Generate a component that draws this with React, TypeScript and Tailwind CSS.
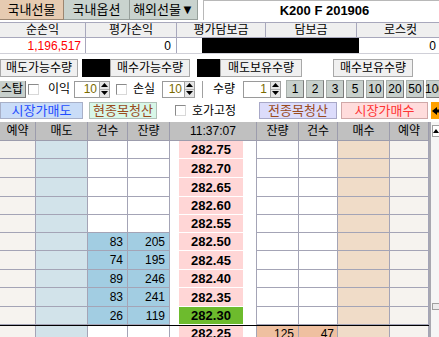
import React from "react";

const rowH = [
  "h-[18px]",
  "h-[19px]",
  "h-[19px]",
  "h-[18px]",
  "h-[18px]",
  "h-[18px]",
  "h-[19px]",
  "h-[18px]",
  "h-[19px]",
  "h-[18px]",
];

const data: { p: string; c?: string; q?: string; green?: boolean }[] = [
  { p: "282.75" },
  { p: "282.70" },
  { p: "282.65" },
  { p: "282.60" },
  { p: "282.55" },
  { p: "282.50", c: "83", q: "205" },
  { p: "282.45", c: "74", q: "195" },
  { p: "282.40", c: "89", q: "246" },
  { p: "282.35", c: "83", q: "241" },
  { p: "282.30", c: "26", q: "119", green: true },
];

const grid =
  "grid grid-cols-[36px_52px_40px_42px_87px_42px_39px_52px_39px]";
const line = "border-r border-b border-[#a4a4b6]";

function Spin() {
  return (
    <div className="w-[11px] h-full flex flex-col bg-[#e6e6e6] border border-[#a0a0a0]">
      <div className="flex-1 flex items-center justify-center border-b border-[#b0b0b0]">
        <svg width="7" height="4" viewBox="0 0 7 4">
          <path d="M0 4L3.5 0L7 4Z" fill="#000" />
        </svg>
      </div>
      <div className="flex-1 flex items-center justify-center">
        <svg width="7" height="4" viewBox="0 0 7 4">
          <path d="M0 0L7 0L3.5 4Z" fill="#000" />
        </svg>
      </div>
    </div>
  );
}

function Check() {
  return (
    <div className="w-[11px] h-[11px] bg-white border border-[#8a8a8a] border-r-[#d8d8d8] border-b-[#d8d8d8]" />
  );
}

export default function App() {
  const nums = ["1", "2", "3", "5", "10", "20", "50", "100"];
  return (
    <div className="w-[439px] h-[337px] overflow-hidden bg-white text-black font-['Liberation_Sans','Noto_Sans_CJK_KR',sans-serif] text-[12px] leading-none">
      {/* Tabs */}
      <div className="flex h-[20px] w-[439px]">
        <div className="w-[64px] bg-[#e6cbb1] border-r border-b border-[#9c8670] flex items-center justify-center text-[13px]">
          국내선물
        </div>
        <div className="w-[66px] bg-[#c9d3ce] border-r border-b border-[#97a09b] flex items-center justify-center text-[13px]">
          국내옵션
        </div>
        <div className="w-[68px] bg-[#c9d3ce] border-r border-b border-[#97a09b] flex items-center justify-center text-[13px]">
          해외선물▼
        </div>
        <div className="w-[5px]" />
        <div className="flex-1 bg-white border-l border-t border-[#b8b8b8] flex items-center justify-center font-bold text-[13px] pl-[6px]">
          K200 F 201906
        </div>
      </div>

      {/* Summary header */}
      <div className="mt-[2px] w-[445px] grid grid-cols-[86px_91px_89px_91px_88px] h-[16px] bg-[#efefef] border-t border-b border-[#a8a8bc]">
        {["순손익", "평가손익", "평가담보금", "담보금", "로스컷"].map((t) => (
          <div
            key={t}
            className="border-r border-[#a8a8bc] flex items-center justify-center"
          >
            {t}
          </div>
        ))}
      </div>
      <div className="w-[445px] grid grid-cols-[86px_91px_89px_91px_88px] h-[16px] bg-white border-b border-[#d0d0d8]">
        <div className="border-r border-[#a8a8bc] flex items-center justify-end pr-[4px] text-[#ff0000]">
          1,196,517
        </div>
        <div className="border-r border-[#a8a8bc] flex items-center justify-end pr-[5px]">
          0
        </div>
        <div className="flex">
          <div className="w-[25px]" />
          <div className="flex-1 bg-black" />
        </div>
        <div className="bg-black w-[93px]" />
        <div className="flex items-center justify-end pr-[9px]">0</div>
      </div>

      {/* Quantity row */}
      <div className="mt-[5px] flex h-[18px] w-[439px]">
        <div className="w-[78px] bg-[#f0f0f0] border border-[#a8a8a8] flex items-center justify-center">
          매도가능수량
        </div>
        <div className="w-[4px]" />
        <div className="w-[28px] bg-black" />
        <div className="w-[80px] bg-[#f0f0f0] border border-[#a8a8a8] flex items-center justify-center">
          매수가능수량
        </div>
        <div className="w-[7px]" />
        <div className="w-[23px] bg-black" />
        <div className="w-[82px] bg-[#f0f0f0] border border-[#a8a8a8] flex items-center justify-center">
          매도보유수량
        </div>
        <div className="w-[31px] bg-white" />
        <div className="w-[80px] bg-[#f0f0f0] border border-[#a8a8a8] flex items-center justify-center">
          매수보유수량
        </div>
        <div className="flex-1 bg-white" />
      </div>

      {/* Stop row */}
      <div className="mt-[3px] flex items-center h-[18px] w-[460px]">
        <div className="w-[26px] h-[17px] bg-[#c8d0cc] border-r border-b border-[#7a7a7a] flex items-center justify-end pr-[2px]">
          스탑
        </div>
        <div className="w-[2px]" />
        <Check />
        <div className="w-[9px]" />
        <div className="w-[26px]">이익</div>
        <div className="flex h-[17px] ml-[0px]">
          <div className="w-[25px] bg-white border border-[#9a9a9a] border-r-0 flex items-center justify-end pr-[2px] text-[#7a6a00]">
            10
          </div>
          <Spin />
        </div>
        <div className="w-[6px]" />
        <Check />
        <div className="w-[6px]" />
        <div className="w-[29px]">손실</div>
        <div className="flex h-[17px]">
          <div className="w-[22px] bg-white border border-[#9a9a9a] border-r-0 flex items-center justify-end pr-[2px] text-[#7a6a00]">
            10
          </div>
          <Spin />
        </div>
        <div className="w-[7px]" />
        <div className="w-[41px] h-[17px] bg-white border-l border-[#a0a0a0] flex items-center pl-[10px]">
          수량
        </div>
        <div className="flex h-[17px]">
          <div className="w-[27px] bg-white border border-[#9a9a9a] border-r-0 flex items-center justify-end pr-[3px] text-[#7a6a00]">
            1
          </div>
          <Spin />
        </div>
        <div className="w-[5px]" />
        <div className="flex gap-[2px]">
          {nums.map((n) => (
            <div
              key={n}
              className="w-[18px] h-[18px] bg-[#c8d0cc] border border-[#7c7c7c] border-t-[#a8b0ac] border-l-[#a8b0ac] flex items-center justify-center text-[12px]"
            >
              {n}
            </div>
          ))}
        </div>
      </div>

      {/* Action row */}
      <div className="mt-[4px] flex items-center h-[17px] w-[445px]">
        <div className="w-[83px] h-[17px] bg-[#c9dcf7] border border-[#a8b0c8] flex items-center justify-center text-[#1f4cff] text-[13px]">
          시장가매도
        </div>
        <div className="w-[6px]" />
        <div className="w-[68px] h-[17px] bg-[#d8f7e8] border border-[#b0c0b8] flex items-center justify-center text-[#9a4a1c] text-[13px]">
          현종목청산
        </div>
        <div className="w-[18px]" />
        <Check />
        <div className="w-[6px]" />
        <div className="w-[67px]">호가고정</div>
        <div className="w-[78px] h-[17px] bg-[#dcdcfb] border border-[#a8a8c8] flex items-center justify-center text-[#9a4a1c] text-[13px]">
          전종목청산
        </div>
        <div className="w-[4px]" />
        <div className="w-[87px] h-[17px] bg-[#ffdcdc] border border-[#d0a8a8] flex items-center justify-center text-[#ff3333] text-[13px]">
          시장가매수
        </div>
        <div className="w-[3px]" />
        <div className="w-[14px] h-[17px] bg-[#ffa000] flex items-center justify-start pl-[1px]">
          <svg width="10" height="8" viewBox="0 0 10 8">
            <path d="M0 4L5 0V2.5H10V5.5H5V8Z" fill="#000" />
          </svg>
        </div>
      </div>

      {/* Order book */}
      <div className="mt-[3px] flex w-[439px]">
        <div className="w-[429px] flex flex-col">
          <div className={`${grid} h-[19px] bg-[#c0c0c0]`}>
            {["예약", "매도", "건수", "잔량", "11:37:07", "잔량", "건수", "매수", "예약"].map(
              (t, i) => (
                <div
                  key={i}
                  className={`border-r border-b border-[#9c9cac] flex items-center justify-center ${
                    i === 4 ? "text-[12px]" : ""
                  }`}
                >
                  {t}
                </div>
              )
            )}
          </div>
          {data.map((r, i) => (
            <div key={r.p} className={`${grid} ${rowH[i]}`}>
              <div className={`${line} bg-[#f6f3ef]`} />
              <div className={`${line} bg-[#d2e3ea]`} />
              <div
                className={`${line} ${
                  r.c ? "bg-[#a2cde2]" : "bg-white"
                } flex items-center justify-end pr-[4px]`}
              >
                {r.c}
              </div>
              <div
                className={`${line} ${
                  r.q ? "bg-[#a2cde2]" : "bg-white"
                } flex items-center justify-end pr-[4px]`}
              >
                {r.q}
              </div>
              <div className="border-r border-[#a4a4b6] bg-white flex pl-[9px] pb-[1px]">
                <div
                  className={`w-[64px] ${
                    r.green ? "bg-[#6dbb2d]" : "bg-[#ffd6d6]"
                  } flex items-center justify-center font-bold text-[13px]`}
                >
                  {r.p}
                </div>
              </div>
              <div className={`${line} bg-white`} />
              <div className={`${line} bg-white`} />
              <div className={`${line} bg-[#f0dcc8]`} />
              <div className={`${line} bg-[#f6f3ef]`} />
            </div>
          ))}
          <div className="h-[1px] bg-black" />
          <div className={`${grid} h-[14px]`}>
            <div className="border-r border-[#a4a4b6] bg-[#f6f3ef]" />
            <div className="border-r border-[#a4a4b6] bg-[#d2e3ea]" />
            <div className="border-r border-[#a4a4b6] bg-white" />
            <div className="border-r border-[#a4a4b6] bg-white" />
            <div className="border-r border-[#a4a4b6] bg-white flex pl-[9px]">
              <div className="w-[64px] bg-[#ffd6d6] flex items-start justify-center pt-[1px] font-bold text-[13px]">
                282.25
              </div>
            </div>
            <div className="border-r border-[#a4a4b6] bg-[#efc0a0] flex items-start justify-end pr-[4px] pt-[2px]">
              125
            </div>
            <div className="border-r border-[#a4a4b6] bg-[#efc0a0] flex items-start justify-end pr-[3px] pt-[2px]">
              47
            </div>
            <div className="border-r border-[#a4a4b6] bg-[#f0dcc8]" />
            <div className="border-r border-[#a4a4b6] bg-[#f6f3ef]" />
          </div>
        </div>
        <div className="w-[10px] bg-[#f6f6f6] border-l-2 border-[#a8a8b0] flex flex-col">
          <div className="mt-[3px] ml-[1px] w-[8px] h-[12px] bg-white border border-[#a0a0a0] flex items-center justify-center">
            <svg width="6" height="4" viewBox="0 0 6 4">
              <path d="M0 4L3 0L6 4Z" fill="#000" />
            </svg>
          </div>
          <div className="mt-[166px] ml-[1px] w-[8px] h-[7px] bg-[#ececec] border border-[#a0a0a0]" />
        </div>
      </div>
    </div>
  );
}
